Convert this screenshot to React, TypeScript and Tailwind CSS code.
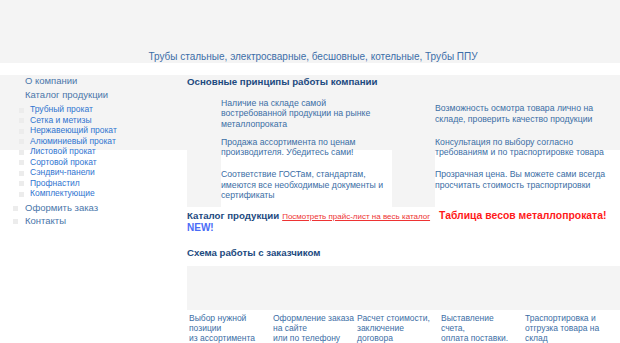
import React from "react"

const sub = [
  "Трубный прокат",
  "Сетка и метизы",
  "Нержавеющий прокат",
  "Алюминиевый прокат",
  "Листовой прокат",
  "Сортовой прокат",
  "Сэндвич-панели",
  "Профнастил",
  "Комплектующие",
]

const steps = [
  ["Выбор нужной", "позиции", "из ассортимента"],
  ["Оформление заказа", "на сайте", "или по телефону"],
  ["Расчет стоимости,", "заключение", "договора"],
  ["Выставление", "счета,", "оплата поставки."],
  ["Траспортировка и", "отгрузка товара на", "склад"],
]

const Sidebar = () => {
  return (
    <div className="w-[187px] shrink-0 text-[9.5px] leading-[14px] text-[#4a76aa]">
      <div className="pl-[25px] mt-[-1px]">О компании</div>
      <div className="pl-[25px]">Каталог продукции</div>
      <div className="mt-[2px]">
        {sub.map((s) => (
          <div key={s} className="flex items-center h-[10.5px] text-[8.5px] leading-[10px] text-[#2f74d0]">
            <span className="w-[5px] h-[5px] bg-[#ececec] ml-[19px] mr-[6px] mt-[2px]"></span>
            {s}
          </div>
        ))}
      </div>
      <div className="flex items-center mt-[3px] h-[13px]">
        <span className="w-[5px] h-[5px] bg-[#ececec] ml-[13px] mr-[7px]"></span>
        Оформить заказ
      </div>
      <div className="flex items-center h-[13px]">
        <span className="w-[5px] h-[5px] bg-[#ececec] ml-[13px] mr-[7px]"></span>
        Контакты
      </div>
    </div>
  )
}

const Principles = () => {
  const cell = "flex flex-col justify-center text-[8.7px] leading-[10.5px] text-[#3b6ea5] whitespace-nowrap"
  return (
    <div className="grid grid-cols-[34px_171px_43px_185px] grid-rows-[35px_32px_44px] mt-[8px]">
      <div className="bg-[#f4f4f4]"></div>
      <div className={cell}>
        <div>Наличие на складе самой</div>
        <div>востребованной продукции на рынке</div>
        <div>металлопроката</div>
      </div>
      <div className="bg-[#f4f4f4]"></div>
      <div className={cell}>
        <div>Возможность осмотра товара лично на</div>
        <div>складе, проверить качество продукции</div>
      </div>

      <div className="bg-[#f4f4f4]"></div>
      <div className={cell}>
        <div>Продажа ассортимента по ценам</div>
        <div>производителя. Убедитесь сами!</div>
      </div>
      <div className="bg-[#f4f4f4]"></div>
      <div className={cell}>
        <div>Консультация по выбору согласно</div>
        <div>требованиям и по траспортировке товара</div>
      </div>

      <div className="bg-[#f4f4f4]"></div>
      <div className={cell}>
        <div>Соответствие ГОСТам, стандартам,</div>
        <div>имеются все необходимые документы и</div>
        <div>сертификаты</div>
      </div>
      <div className="bg-[#f4f4f4]"></div>
      <div className="flex flex-col justify-start pt-[6px] text-[8.7px] leading-[10.5px] text-[#3b6ea5] whitespace-nowrap">
        <div>Прозрачная цена. Вы можете сами всегда</div>
        <div>просчитать стоимость траспортировки</div>
      </div>
    </div>
  )
}

const App = () => {
  return (
    <div className="w-[620px] h-[343px] overflow-hidden bg-white font-['Liberation_Sans',Arial,sans-serif]">
      <div className="h-[63px] bg-[#f4f4f4] flex items-end justify-center">
        <span className="text-[10px] leading-[12px] text-[#3c6ea8] pl-[6px]">
          Трубы стальные, электросварные, бесшовные, котельные, Трубы ППУ
        </span>
      </div>
      <div className="flex mt-[12px] bg-[linear-gradient(#f4f4f4_75px,white_75px)]">
        <Sidebar />
        <div className="flex-1">
          <div className="text-[9.7px] leading-[13px] font-bold text-[#1d4a80]">
            Основные принципы работы компании
          </div>
          <Principles />
          <div className="flex items-baseline whitespace-nowrap mt-[1px] h-[13px]">
            <span className="text-[9.7px] leading-[13px] font-bold text-[#1d4a80]">Каталог продукции</span>
            <a className="ml-[3px] text-[8px] text-[#ee3333] underline" href="#">
              Посмотреть прайс-лист на весь каталог
            </a>
            <span className="ml-[9px] text-[10.4px] font-bold text-[#ff1a1a]">Таблица весов металлопроката!</span>
          </div>
          <div className="text-[10px] leading-[13px] font-bold text-[#4a6cf7]">NEW!</div>
          <div className="mt-[12px] text-[9.7px] leading-[13px] font-bold text-[#1d4a80]">
            Схема работы с заказчиком
          </div>
          <div className="mt-[7px] h-[44px] bg-[#f4f4f4]"></div>
          <div className="grid grid-cols-[84px_84px_84px_84px_84px] mt-[3px] pl-[2px]">
            {steps.map((s, i) => (
              <div key={i} className="text-[8.5px] leading-[10px] text-[#3b6ea5] whitespace-nowrap">
                {s.map((l) => (
                  <div key={l}>{l}</div>
                ))}
              </div>
            ))}
          </div>
        </div>
      </div>
    </div>
  )
}

export default App
